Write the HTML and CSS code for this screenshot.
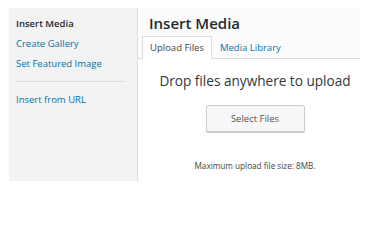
FILE: index.html
```html
<!DOCTYPE html>
<html>

<head>
  <title>Insert Media</title>
  <meta charset="utf-8" />
  <link rel="stylesheet" href="styles.css">
</head>

<body>
  <div id="modal">
    <div id="menu">
      <a class="menu-item active-item">Insert Media</a>
      <a class="menu-item">Create Gallery</a>
      <a class="menu-item">Set Featured Image</a>
      <div class="separator"></div>
      <a class="menu-item">Insert from URL</a>
    </div>
    <div id="frame">
      <div id="frame-header">
        <h1>Insert Media</h1>
        <div id="tabs">
          <a class="tab active-tab">Upload Files</a>
          <a class="tab">Media Library</a>
        </div>
      </div>
      <div id="uploader">
        <h2>Drop files anywhere to upload</h2>
        <button class="select-button">Select Files</button>
        <p class="max-size">Maximum upload file size: 8MB.</p>
      </div>
    </div>
  </div>
</body>

</html>
```

FILE: styles.css
```css
html,
body {
  background-color: #ffffff;
  margin: 0;
  padding: 0;
  font-family: "Open Sans", sans-serif;
  color: #23282d;
}

#modal {
  display: flex;
  width: 351px;
  height: 173px;
  margin: 8px 0 0 9px;
}

#menu {
  display: flex;
  flex-direction: column;
  background: #f3f3f3;
  border-right: 1px solid #dddddd;
  padding: 6px 0 0 7px;
  box-sizing: border-box;
  width: 129px;
}

.menu-item {
  font-size: 9.5px;
  line-height: 12px;
  padding: 4px 0;
  color: #0073aa;
}

.active-item {
  color: #23282d;
  font-weight: 600;
}

.separator {
  width: 109px;
  height: 1px;
  background: #dddddd;
  margin: 7px 0 8px 0;
}

#frame {
  flex: 1;
  display: flex;
  flex-direction: column;
}

#frame-header {
  background: #fcfcfc;
  border-bottom: 1px solid #dddddd;
  padding: 0 0 0 4px;
}

h1 {
  margin: 0;
  padding: 6px 0 0 7px;
  font-size: 15px;
  line-height: 18px;
  font-weight: 600;
  color: #23282d;
  height: 22px;
}

#tabs {
  display: flex;
  margin-bottom: -1px;
}

.tab {
  font-size: 9.5px;
  line-height: 21px;
  padding: 0 7px;
  color: #0073aa;
  border: 1px solid transparent;
  border-bottom: none;
}

.active-tab {
  color: #444444;
  background: #ffffff;
  border-color: #dddddd;
  height: 22px;
}

#uploader {
  display: flex;
  flex-direction: column;
  align-items: center;
  padding: 13px 0 0 12px;
}

h2 {
  margin: 0;
  font-size: 13.6px;
  line-height: 18px;
  font-weight: 400;
  color: #32373c;
}

.select-button {
  margin-top: 15px;
  width: 99px;
  height: 27px;
  background: #f7f7f7;
  border: 1px solid #cccccc;
  border-radius: 2px;
  box-shadow: 0 1px 0 #cccccc;
  font-family: "Open Sans", sans-serif;
  font-size: 9.5px;
  color: #555555;
  padding: 0;
}

.max-size {
  margin: 0;
  padding-top: 28px;
  font-size: 8.2px;
  color: #444444;
}
```
